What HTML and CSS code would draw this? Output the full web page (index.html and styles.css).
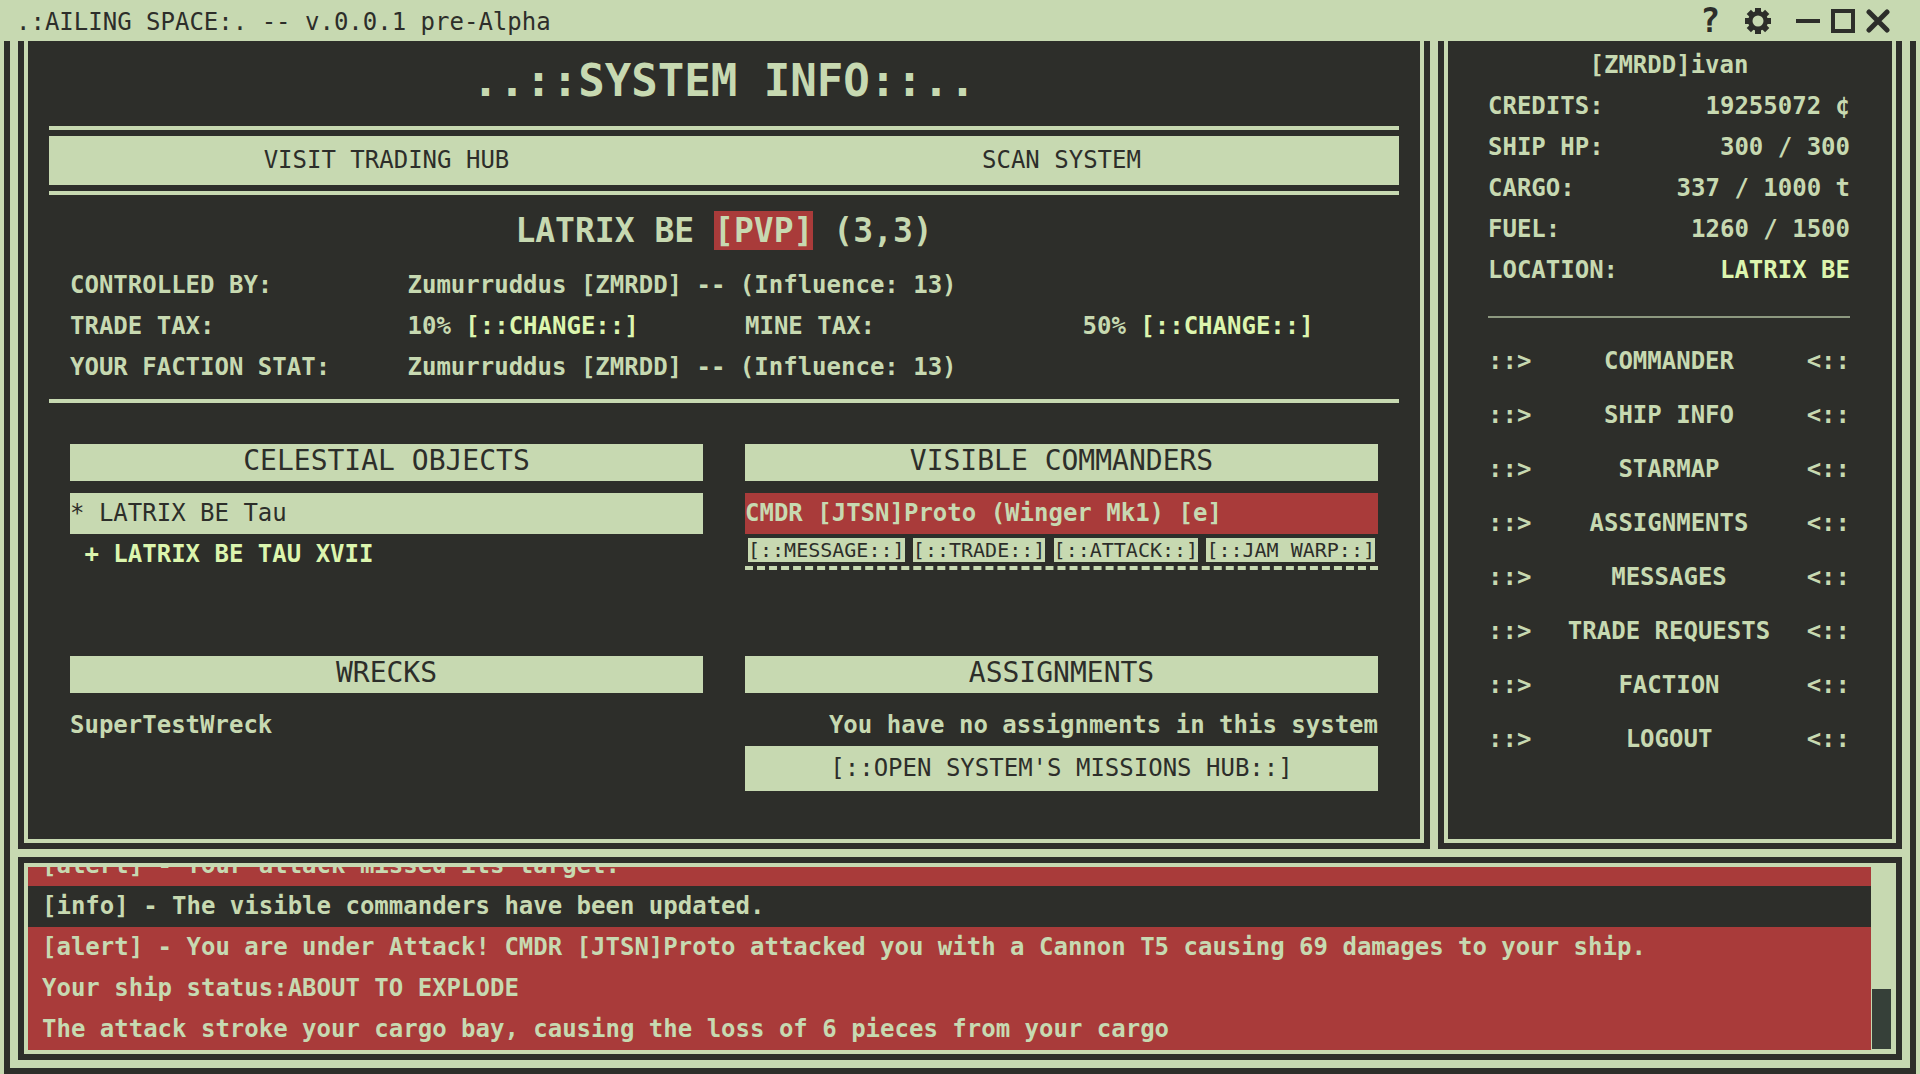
FILE: index.html
```html
<!DOCTYPE html>
<html lang="en">
<head>
    <meta charset="UTF-8">
    <meta name="viewport" content="width=device-width, initial-scale=1.0">
    <title>.:AILING SPACE:. -- v.0.0.1 pre-Alpha</title>
    <link rel="stylesheet" href="styles.css">
</head>
<body>
    <header class="titlebar">
        <span>.:AILING SPACE:. -- v.0.0.1 pre-Alpha</span>
        <div class="titlebar-tools">
            <button class="tool help" type="button" aria-label="Help">?</button>
            <button class="tool" type="button" aria-label="Settings">
                <svg width="26" height="26" viewBox="-13 -13 26 26">
                    <g fill="#2d2e2a">
                        <rect x="-3" y="-13" width="6" height="26"/>
                        <rect x="-3" y="-13" width="6" height="26" transform="rotate(45)"/>
                        <rect x="-3" y="-13" width="6" height="26" transform="rotate(90)"/>
                        <rect x="-3" y="-13" width="6" height="26" transform="rotate(135)"/>
                        <circle r="10"/>
                    </g>
                    <circle r="5.5" fill="#c7d9b1"/>
                </svg>
            </button>
            <div class="window-buttons">
                <button class="tool" type="button" aria-label="Minimize">
                    <svg width="24" height="24" viewBox="0 0 24 24"><path d="M0 12h24" stroke="#2d2e2a" stroke-width="4"/></svg>
                </button>
                <button class="tool" type="button" aria-label="Maximize">
                    <svg width="24" height="24" viewBox="0 0 24 24"><path d="M2 2h20v20H2z" fill="none" stroke="#2d2e2a" stroke-width="4"/></svg>
                </button>
                <button class="tool" type="button" aria-label="Close">
                    <svg width="24" height="24" viewBox="0 0 24 24"><path d="M3 3l18 18M21 3L3 21" stroke="#2d2e2a" stroke-width="5" stroke-linecap="round"/></svg>
                </button>
            </div>
        </div>
    </header>

    <div class="frame">
        <main class="panel system">
            <h1>..::SYSTEM INFO::..</h1>
            <nav class="actions">
                <button type="button">VISIT TRADING HUB</button>
                <button type="button">SCAN SYSTEM</button>
            </nav>

            <h2>LATRIX BE <span class="pvp">[PVP]</span> (3,3)</h2>
            <div class="facts">
                <span>CONTROLLED BY:</span>
                <span class="wide">Zumurruddus [ZMRDD] -- (Influence: 13)</span>
                <span>TRADE TAX:</span>
                <span>10% <a href="#">[::CHANGE::]</a></span>
                <span>MINE TAX:</span>
                <span>50% <a href="#">[::CHANGE::]</a></span>
                <span>YOUR FACTION STAT:</span>
                <span class="wide">Zumurruddus [ZMRDD] -- (Influence: 13)</span>
            </div>

            <div class="lists">
                <section>
                    <h3>CELESTIAL OBJECTS</h3>
                    <ul>
                        <li class="star">* LATRIX BE Tau</li>
                        <li>&nbsp;<a href="#">+ LATRIX BE TAU XVII</a></li>
                    </ul>
                </section>
                <section>
                    <h3>VISIBLE COMMANDERS</h3>
                    <div class="commander">
                        <div class="enemy">CMDR [JTSN]Proto (Winger Mk1) [e]</div>
                        <div class="commander-actions">
                            <button type="button">[::MESSAGE::]</button>
                            <button type="button">[::TRADE::]</button>
                            <button type="button">[::ATTACK::]</button>
                            <button type="button">[::JAM WARP::]</button>
                        </div>
                    </div>
                </section>
                <section>
                    <h3>WRECKS</h3>
                    <ul>
                        <li>SuperTestWreck</li>
                    </ul>
                </section>
                <section>
                    <h3>ASSIGNMENTS</h3>
                    <p class="empty">You have no assignments in this system</p>
                    <button class="hub" type="button">[::OPEN SYSTEM'S MISSIONS HUB::]</button>
                </section>
            </div>
        </main>

        <aside class="panel status">
            <div class="pilot">[ZMRDD]ivan</div>
            <dl>
                <div><dt>CREDITS:</dt><dd>19255072 ¢</dd></div>
                <div><dt>SHIP HP:</dt><dd>300 / 300</dd></div>
                <div><dt>CARGO:</dt><dd>337 / 1000 t</dd></div>
                <div><dt>FUEL:</dt><dd>1260 / 1500</dd></div>
                <div><dt>LOCATION:</dt><dd><a href="#">LATRIX BE</a></dd></div>
            </dl>
            <nav class="menu">
                <a href="#"><span>::&gt;</span><span>COMMANDER</span><span>&lt;::</span></a>
                <a href="#"><span>::&gt;</span><span>SHIP INFO</span><span>&lt;::</span></a>
                <a href="#"><span>::&gt;</span><span>STARMAP</span><span>&lt;::</span></a>
                <a href="#"><span>::&gt;</span><span>ASSIGNMENTS</span><span>&lt;::</span></a>
                <a href="#"><span>::&gt;</span><span>MESSAGES</span><span>&lt;::</span></a>
                <a href="#"><span>::&gt;</span><span>TRADE REQUESTS</span><span>&lt;::</span></a>
                <a href="#"><span>::&gt;</span><span>FACTION</span><span>&lt;::</span></a>
                <a href="#"><span>::&gt;</span><span>LOGOUT</span><span>&lt;::</span></a>
            </nav>
        </aside>

        <section class="panel log">
            <div class="messages">
                <p class="alert">[alert] - Your attack missed its target.</p>
                <p>[info] - The visible commanders have been updated.</p>
                <p class="alert">[alert] - You are under Attack! CMDR [JTSN]Proto attacked you with a Cannon T5 causing 69 damages to your ship.<br>Your ship status:ABOUT TO EXPLODE<br>The attack stroke your cargo bay, causing the loss of 6 pieces from your cargo</p>
            </div>
            <div class="scrollbar"><div class="thumb"></div></div>
        </section>
    </div>
</body>
</html>
```
FILE: styles.css
```css
* {
    box-sizing: border-box;
}
body {
    margin: 0;
    height: 100vh;
    display: flex;
    flex-direction: column;
    background: #c7d9b1;
    color: #c7d9b1;
    font: bold 24px/41px "DejaVu Sans Mono", monospace;
}
h1, h2, h3, p, ul, dl, dd {
    margin: 0;
    padding: 0;
}
ul {
    list-style: none;
}
a {
    color: #dcf5ae;
    text-decoration: none;
}
button {
    border: 0;
    padding: 0;
    background: #c7d9b1;
    color: #2d2e2a;
    font: inherit;
    font-weight: normal;
    cursor: pointer;
}

/* title bar, lies over the top edge of the panels */
.titlebar {
    position: relative;
    z-index: 1;
    flex: none;
    height: 41px;
    padding: 0 30px 0 16px;
    display: flex;
    justify-content: space-between;
    background: #c7d9b1;
    color: #2d2e2a;
    font-weight: normal;
    line-height: 44px;
}
.titlebar-tools {
    display: flex;
    align-items: center;
    gap: 25px;
}
.window-buttons {
    display: flex;
    gap: 11px;
}
.tool {
    display: flex;
    align-items: center;
    height: 41px;
}
.help {
    font-size: 33px;
    font-weight: bold;
    line-height: 41px;
}

/* outer frame */
.frame {
    flex: 1;
    min-height: 0;
    margin: 0 4px;
    padding: 0 8px 8px;
    border: solid #2d2e2a;
    border-width: 0 6px 6px;
    display: grid;
    grid-template-columns: minmax(0, 1fr) 464px;
    grid-template-rows: minmax(0, 1fr) auto;
    gap: 8px;
}
.panel {
    background: #2d2e2a;
    border: 4px solid #c7d9b1;
    outline: 6px solid #2d2e2a;
    margin: 6px;
}
.system, .status {
    margin-top: 0;
    border-top: 0;
    overflow: hidden;
}

/* system info */
.system {
    padding: 0 21px;
}
h1 {
    padding-top: 10px;
    font-size: 44px;
    line-height: 60px;
    text-align: center;
}
.actions {
    margin-top: 15px;
    padding: 6px 0;
    border: solid #c7d9b1;
    border-width: 4px 0;
    display: flex;
}
.actions button {
    flex: 1;
    height: 49px;
}
h2 {
    padding: 14px 0 12px;
    font-size: 33px;
    line-height: 44px;
    text-align: center;
}
.pvp {
    background: #a93b3a;
}
.facts {
    padding-bottom: 11px;
    border-bottom: 4px solid #c7d9b1;
    display: grid;
    grid-template-columns: repeat(4, 1fr);
}
.facts > span {
    padding-left: 21px;
    white-space: nowrap;
}
.facts .wide {
    grid-column: span 3;
}
.lists {
    padding: 41px 21px 0;
    display: grid;
    grid-template-columns: 1fr 1fr;
    grid-template-rows: 212px auto;
    column-gap: 42px;
}
h3 {
    margin-bottom: 12px;
    padding-bottom: 3px;
    background: #c7d9b1;
    color: #2d2e2a;
    font-size: 28px;
    font-weight: normal;
    line-height: 34px;
    text-align: center;
}
.star {
    background: #c7d9b1;
    color: #2d2e2a;
    font-weight: normal;
}
.commander {
    border-bottom: 4px dashed #c7d9b1;
}
.enemy, .alert {
    background: #a93b3a;
}
.commander-actions {
    padding: 4px 3px;
    display: flex;
    justify-content: space-between;
}
.commander-actions button {
    height: 24px;
    font-size: 20px;
    line-height: 22px;
}
.empty {
    text-align: right;
}
.hub {
    width: 100%;
    height: 45px;
}

/* ship status and menu */
.status {
    padding: 4px 42px 0 40px;
}
.pilot {
    text-align: center;
}
dl {
    padding-bottom: 25px;
    border-bottom: 2px solid #8d9980;
}
dl div {
    display: flex;
    justify-content: space-between;
}
.menu {
    padding-top: 16px;
}
.menu a {
    display: flex;
    justify-content: space-between;
    color: #c7d9b1;
    line-height: 54px;
}

/* message log */
.log {
    grid-column: 1 / -1;
    height: 191px;
    display: flex;
}
.messages {
    flex: 1;
    overflow: hidden;
    display: flex;
    flex-direction: column;
    justify-content: flex-end;
}
.messages p {
    padding-left: 14px;
}
.scrollbar {
    width: 21px;
    padding: 1px;
    background: #c7d9b1;
    display: flex;
    align-items: flex-end;
}
.thumb {
    flex: 1;
    height: 60px;
    background: #364039;
}
```
